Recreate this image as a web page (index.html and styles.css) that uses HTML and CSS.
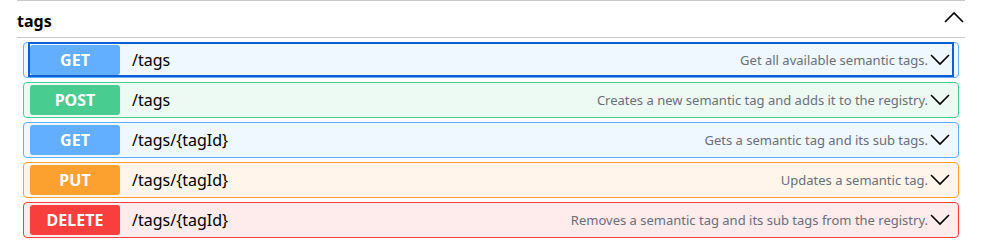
FILE: index.html
```html
<!DOCTYPE html>
<html>
<head>
<meta charset="utf-8">
<title>tags</title>
<link rel="stylesheet" href="styles.css">
</head>
<body>
<div class="tag-section">
    <div class="tag-head">
        <span class="tag-name">tags</span>
        <svg class="arrow" width="20" height="12" viewBox="0 0 20 12"><path d="M1 11 L10 2 L19 11" fill="none" stroke="#000" stroke-width="1.6"/></svg>
    </div>
    <div class="ops">
        <div class="op get">
            <div class="op-summary focused">
                <span class="method">GET</span>
                <span class="path">/tags</span>
                <span class="desc">Get all available semantic tags.</span>
                <svg class="arrow" width="20" height="12" viewBox="0 0 20 12"><path d="M1 1 L10 10 L19 1" fill="none" stroke="#000" stroke-width="1.6"/></svg>
            </div>
        </div>
        <div class="op post">
            <div class="op-summary">
                <span class="method">POST</span>
                <span class="path">/tags</span>
                <span class="desc">Creates a new semantic tag and adds it to the registry.</span>
                <svg class="arrow" width="20" height="12" viewBox="0 0 20 12"><path d="M1 1 L10 10 L19 1" fill="none" stroke="#000" stroke-width="1.6"/></svg>
            </div>
        </div>
        <div class="op get">
            <div class="op-summary">
                <span class="method">GET</span>
                <span class="path">/tags/{tagId}</span>
                <span class="desc">Gets a semantic tag and its sub tags.</span>
                <svg class="arrow" width="20" height="12" viewBox="0 0 20 12"><path d="M1 1 L10 10 L19 1" fill="none" stroke="#000" stroke-width="1.6"/></svg>
            </div>
        </div>
        <div class="op put">
            <div class="op-summary">
                <span class="method">PUT</span>
                <span class="path">/tags/{tagId}</span>
                <span class="desc">Updates a semantic tag.</span>
                <svg class="arrow" width="20" height="12" viewBox="0 0 20 12"><path d="M1 1 L10 10 L19 1" fill="none" stroke="#000" stroke-width="1.6"/></svg>
            </div>
        </div>
        <div class="op delete">
            <div class="op-summary">
                <span class="method">DELETE</span>
                <span class="path">/tags/{tagId}</span>
                <span class="desc">Removes a semantic tag and its sub tags from the registry.</span>
                <svg class="arrow" width="20" height="12" viewBox="0 0 20 12"><path d="M1 1 L10 10 L19 1" fill="none" stroke="#000" stroke-width="1.6"/></svg>
            </div>
        </div>
    </div>
</div>
</body>
</html>
```

FILE: styles.css
```css
*{
    margin: 0;
    padding: 0;
    box-sizing: border-box;
}
body{
    font-family: "Noto Sans", "Open Sans", sans-serif;
    color: #3b4151;
    background: #fff;
}
.tag-section{
    margin: 0 19px 0 17px;
    border-top: 1px solid #c8c8c8;
}
.tag-head{
    display: flex;
    align-items: center;
    justify-content: space-between;
    height: 37px;
    border-bottom: 1px solid #c8c8c8;
}
.tag-name{
    font-size: 16px;
    font-weight: 700;
    color: #000;
    padding-top: 3px;
}
.tag-head .arrow{
    margin-right: 1px;
    margin-top: -4px;
}
.ops{
    padding: 4px 6px 0 6px;
}
.op{
    height: 36px;
    margin-bottom: 4px;
    border: 1px solid;
    border-radius: 4px;
}
.op-summary{
    display: flex;
    align-items: center;
    height: 34px;
    padding: 2px 8px 2px 6px;
}
.op-summary.focused{
    margin: -1px 4px 0 4px;
    padding: 0 2px 0 0;
    border: 2px solid #0b5fd7;
    height: 35px;
}
.method{
    width: 90px;
    height: 30px;
    line-height: 30px;
    border-radius: 3px;
    color: #fff;
    font-size: 16px;
    font-weight: 700;
    text-align: center;
    flex-shrink: 0;
}
.path{
    margin-left: 12px;
    font-size: 16px;
    color: #000;
}
.desc{
    flex: 1;
    text-align: right;
    font-size: 13px;
    color: #6b6f78;
}
.op-summary .arrow{
    margin-left: 2px;
    flex-shrink: 0;
}
.get{
    background: #eff7ff;
    border-color: #61affe;
}
.get .method{
    background: #61affe;
}
.post{
    background: #edfaf4;
    border-color: #49cc90;
}
.post .method{
    background: #49cc90;
}
.put{
    background: #fff5ea;
    border-color: #fca130;
}
.put .method{
    background: #fca130;
}
.delete{
    background: #feebeb;
    border-color: #f93e3e;
}
.delete .method{
    background: #f93e3e;
}
```
